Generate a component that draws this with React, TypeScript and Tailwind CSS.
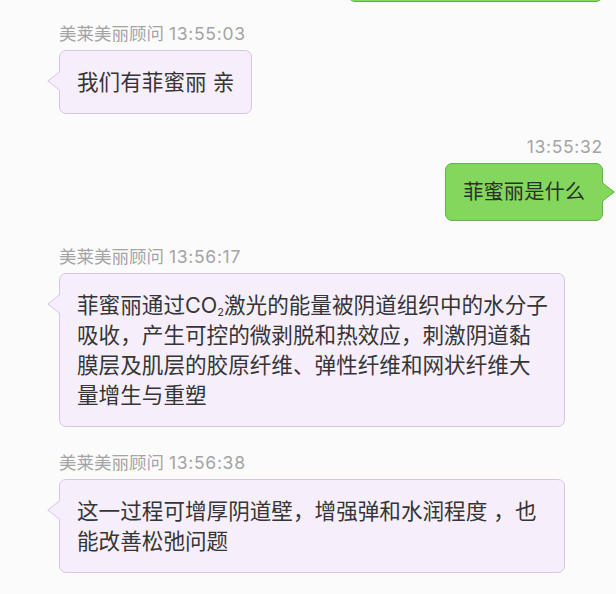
import React from "react";

const FONT = { fontFamily: '"Inter", "Noto Sans CJK SC", sans-serif' };

function LeftTail() {
  return (
    <svg
      className="absolute left-[-13px] top-[20px]"
      width="14"
      height="20"
      viewBox="0 0 14 20"
    >
      <polygon points="14,0 0.5,10 14,20" fill="#f6effb" />
      <path d="M12.8 0.6 L0.8 10 L12.8 19.4" fill="none" stroke="#d7c5e4" strokeWidth="1" />
    </svg>
  );
}

function RightTail() {
  return (
    <svg
      className="absolute right-[-13px] top-[18px]"
      width="14"
      height="20"
      viewBox="0 0 14 20"
    >
      <polygon points="0,0 13.5,10 0,20" fill="#82d75c" />
      <path d="M1.2 0.6 L13.2 10 L1.2 19.4" fill="none" stroke="#62b446" strokeWidth="1" />
    </svg>
  );
}

function Label({ name, time }: { name?: string; time: string }) {
  return (
    <div className="text-[17.5px] leading-[22px] text-[#a4a4a4] whitespace-nowrap">
      {name ? <span>{name} </span> : null}
      <span className="tracking-[0.7px]">{time}</span>
    </div>
  );
}

function LeftBubble({ children, wide }: { children: React.ReactNode; wide?: boolean }) {
  return (
    <div
      className={`relative mt-[5px] rounded-[7px] border border-[#d7c5e4] bg-[#f6effb] px-[17px] py-[16px] text-[21.6px] leading-[30px] text-[#353535] whitespace-nowrap ${
        wide ? "w-[506px]" : "self-start"
      }`}
    >
      <LeftTail />
      {children}
    </div>
  );
}

export default function App() {
  return (
    <div
      className="flex h-[594px] w-[616px] flex-col overflow-hidden bg-[#fcfbfc] pl-[59px] pr-[13px]"
      style={FONT}
    >
      <div className="-mt-[38px] h-[40px] w-[255px] shrink-0 self-end rounded-[7px] border border-[#62b446] bg-[#82d75c]" />

      <div className="mt-[21px] flex flex-col">
        <Label name="美莱美丽顾问" time="13:55:03" />
        <LeftBubble>我们有菲蜜丽 亲</LeftBubble>
      </div>

      <div className="mt-[22px] flex flex-col items-end">
        <Label time="13:55:32" />
        <div className="relative mt-[5px] rounded-[7px] border border-[#62b446] bg-[#82d75c] px-[17px] py-[14px] text-[20.3px] leading-[28px] text-[#2a3126] whitespace-nowrap">
          <RightTail />
          菲蜜丽是什么
        </div>
      </div>

      <div className="mt-[25px] flex flex-col">
        <Label name="美莱美丽顾问" time="13:56:17" />
        <LeftBubble wide>
          菲蜜丽通过CO<sub className="text-[11px]">2</sub>激光的能量被阴道组织中的水分子
          <br />
          吸收，产生可控的微剥脱和热效应，刺激阴道黏
          <br />
          膜层及肌层的胶原纤维、弹性纤维和网状纤维大
          <br />
          量增生与重塑
        </LeftBubble>
      </div>

      <div className="mt-[25px] flex flex-col">
        <Label name="美莱美丽顾问" time="13:56:38" />
        <LeftBubble wide>
          这一过程可增厚阴道壁，增强弹和水润程度 ，也
          <br />
          能改善松弛问题
        </LeftBubble>
      </div>
    </div>
  );
}
